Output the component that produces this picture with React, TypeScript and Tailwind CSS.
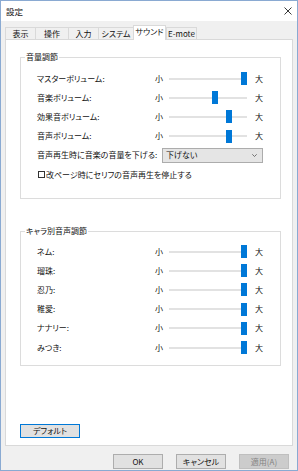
import React from 'react'

const soundRows = [
  { label: 'マスターボリューム:', value: 72 },
  { label: '音楽ボリューム:', value: 43 },
  { label: '効果音ボリューム:', value: 57 },
  { label: '音声ボリューム:', value: 57 },
]

const charaRows = ['ネム:', '瑠珠:', '忍乃:', '稚愛:', 'ナナリー:', 'みつき:']

const tabs = [
  { name: '表示', w: 'w-[30px]' },
  { name: '操作', w: 'w-[33px]' },
  { name: '入力', w: 'w-[30px]' },
  { name: 'システム', w: 'w-[35px]' },
  { name: 'サウンド', w: 'w-[33px]', active: true },
  { name: 'E-mote', w: 'w-[31px]' },
]

function SliderRow({ label, value }: { label: string; value: number }) {
  return (
    <div className="flex h-[19.2px] items-center">
      <span className="w-[118px]">{label}</span>
      <span className="w-[14px]">小</span>
      <div className="relative h-[13px] w-[78px]">
        <div className="absolute left-0 right-0 top-[5.5px] h-[2px] bg-[#e2e2e2]" />
        <div
          className="absolute top-0 h-[13px] w-[6px] bg-[#0078d7]"
          style={{ left: value }}
        />
      </div>
      <span className="ml-[8px]">大</span>
    </div>
  )
}

function Group({ title, children, className }: { title: string; children: React.ReactNode; className?: string }) {
  return (
    <fieldset className={`ml-[14px] w-[261px] border border-[#dcdcdc] ${className ?? ''}`}>
      <legend className="ml-[4px] px-[1px] leading-[10px]">{title}</legend>
      {children}
    </fieldset>
  )
}

export default function App() {
  return (
    <div className="flex h-[471px] w-[298px] flex-col border border-[#8aaad2] bg-[#f0f0f0] font-['Noto_Sans_CJK_JP','Noto_Sans',sans-serif] text-[8px] text-[#111] [font-feature-settings:'palt']">
      {/* タイトルバー */}
      <div className="flex h-[20px] shrink-0 items-center justify-between bg-white pl-[5px] pr-[5px]">
        <span className="text-[8.5px]">設定</span>
        <svg width="8" height="8" viewBox="0 0 8 8">
          <path d="M0.5 0.5 L7.5 7.5 M7.5 0.5 L0.5 7.5" stroke="#222" strokeWidth="0.9" />
        </svg>
      </div>

      <div className="flex flex-1 flex-col px-[4px]">
        <div className="mt-[4px] flex h-[14px] items-end">
          {tabs.map((t) =>
            t.active ? (
              <div
                key={t.name}
                className={`relative z-10 -mb-px flex h-[15px] items-center justify-center border-x border-t border-[#d9d9d9] bg-white pb-[2px] ${t.w}`}
              >
                {t.name}
              </div>
            ) : (
              <div
                key={t.name}
                className={`flex h-[12px] items-center justify-center border-l border-t border-[#d9d9d9] bg-[#f0f0f0] last:border-r ${t.w}`}
              >
                {t.name}
              </div>
            )
          )}
        </div>

        <div className="flex h-[407px] flex-col border border-[#d9d9d9] bg-white pt-[12px]">
          <Group title="音量調節" className="h-[147px]">
            <div className="pl-[16px] pt-[7px]">
              {soundRows.map((r) => (
                <SliderRow key={r.label} label={r.label} value={r.value} />
              ))}
              <div className="flex h-[19.2px] items-center">
                <span className="w-[125px]">音声再生時に音楽の音量を下げる:</span>
                <div className="flex h-[15px] w-[101px] items-center justify-between border border-[#acacac] bg-[#e5e5e5] pl-[3px] pr-[5px]">
                  <span>下げない</span>
                  <svg width="5" height="3" viewBox="0 0 5 3">
                    <path d="M0.3 0.3 L2.5 2.5 L4.7 0.3" stroke="#555" strokeWidth="0.8" fill="none" />
                  </svg>
                </div>
              </div>
              <div className="flex h-[19.2px] items-center">
                <div className="ml-[1px] mr-[1px] h-[7px] w-[7px] border border-[#333] bg-white" />
                <span>改ページ時にセリフの音声再生を停止する</span>
              </div>
            </div>
          </Group>

          <Group title="キャラ別音声調節" className="mt-[27px] h-[140px]">
            <div className="pl-[16px] pt-[6px]">
              {charaRows.map((c) => (
                <SliderRow key={c} label={c} value={72} />
              ))}
            </div>
          </Group>

          <div className="mt-auto mb-[7px] ml-[14px] flex h-[14px] w-[60px] items-center justify-center border border-[#0078d7] bg-[#e1e1e1]">
            デフォルト
          </div>
        </div>

        <div className="mt-[8px] flex justify-end gap-[13px] pr-[4px]">
          <div className="flex h-[15px] w-[50px] items-center justify-center border border-[#adadad] bg-[#e1e1e1]">
            OK
          </div>
          <div className="flex h-[15px] w-[50px] items-center justify-center border border-[#adadad] bg-[#e1e1e1]">
            キャンセル
          </div>
          <div className="flex h-[15px] w-[50px] items-center justify-center border border-[#bfbfbf] bg-[#cccccc] text-[#838383]">
            適用(A)
          </div>
        </div>
      </div>
    </div>
  )
}
